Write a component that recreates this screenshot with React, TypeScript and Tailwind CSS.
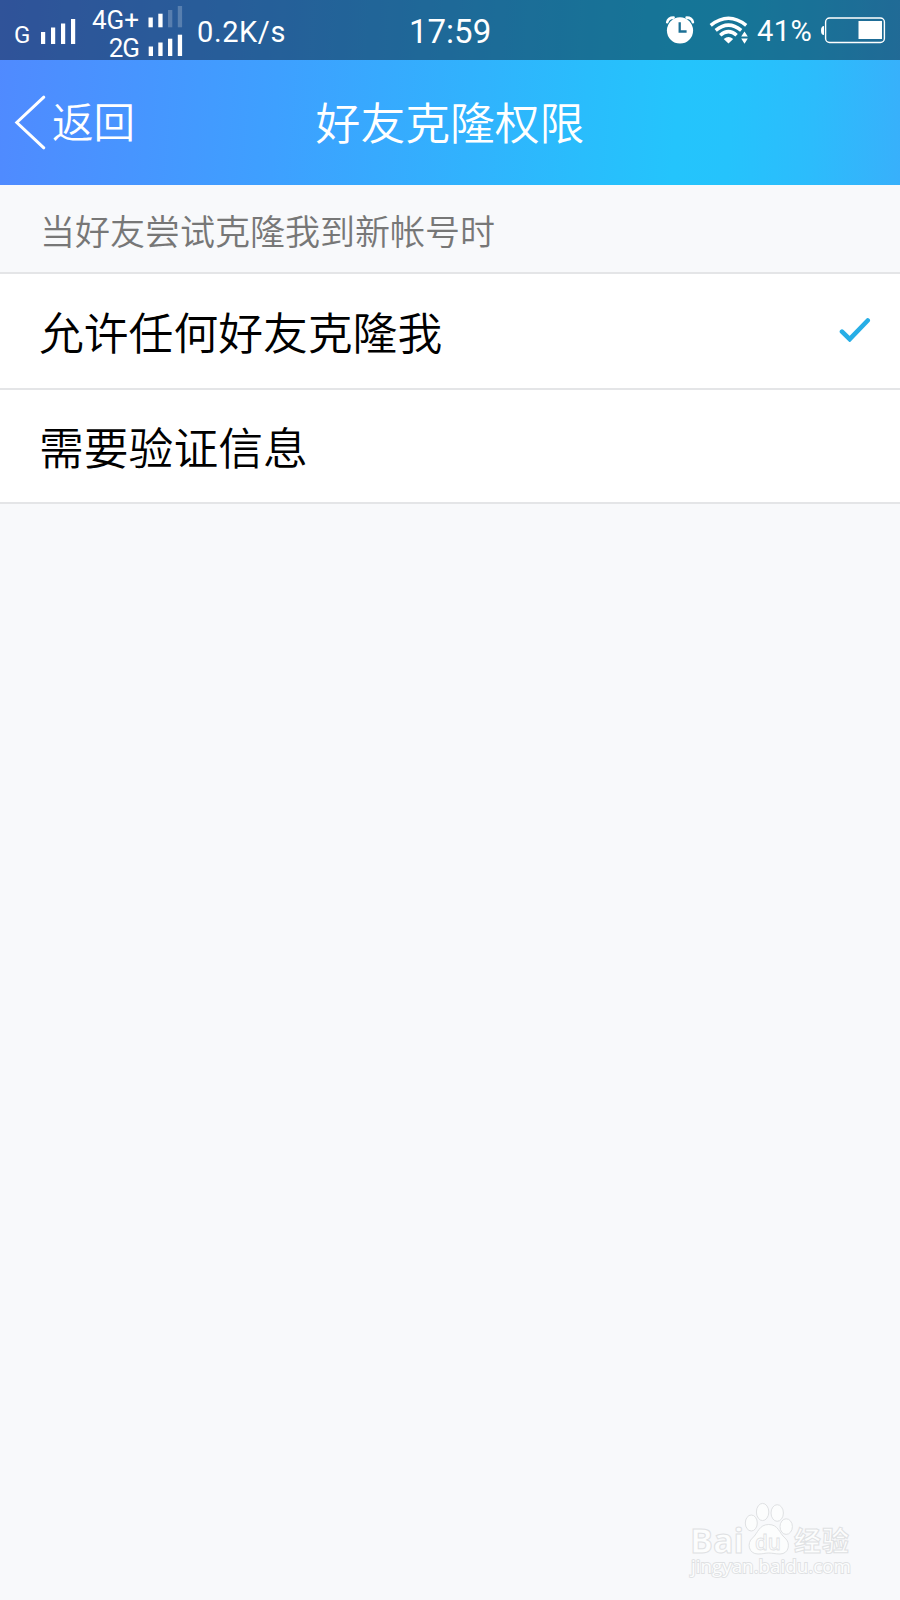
import React from "react";

function SignalBars() {
  return (
    <svg className="ml-[41px] mt-[18px] h-[27px] w-9 shrink-0" viewBox="41 18 36 27" fill="#fff">
      <rect x="41" y="32" width="4.2" height="12" />
      <rect x="51" y="27.5" width="4.2" height="16.5" />
      <rect x="61" y="23.5" width="4.2" height="20.5" />
      <rect x="71" y="19" width="4.2" height="25" />
    </svg>
  );
}

function StackedBars() {
  return (
    <svg className="h-[60px] w-9 shrink-0" viewBox="148 0 36 60" fill="#fff">
      <rect x="148.5" y="17.5" width="4.3" height="9.8" />
      <rect x="158.3" y="13.7" width="4.3" height="13.6" />
      <rect x="168" y="10" width="4.3" height="17.3" opacity="0.22" />
      <rect x="177.8" y="6" width="4.3" height="21.3" opacity="0.22" />
      <rect x="148.7" y="46.5" width="4.3" height="9.5" />
      <rect x="158.3" y="42.5" width="4.3" height="13.5" />
      <rect x="168" y="38.7" width="4.3" height="17.3" />
      <rect x="177.8" y="34.7" width="4.3" height="21.3" />
    </svg>
  );
}

function AlarmIcon() {
  return (
    <svg className="h-[60px] w-[30px] shrink-0" viewBox="665 0 30 60" fill="none">
      <circle cx="680" cy="30.4" r="13.1" fill="#fff" />
      <path d="M667.2 22.3 Q668.2 17.6 673.6 17.6M686.6 17.6 Q692 17.6 692.9 22.3" stroke="#fff" strokeWidth="2.6" strokeLinecap="round" />
      <path d="M679.7 22.2V31.5H686.6" stroke="#1c7095" strokeWidth="2.3" />
    </svg>
  );
}

function WifiIcon() {
  return (
    <svg className="ml-3.5 h-[60px] w-10 shrink-0" viewBox="709 0 40 60" fill="none">
      <g stroke="#fff" strokeWidth="3.5">
        <path d="M710.7 25.4 Q728.5 11.2 746.2 25.4" />
        <path d="M715.7 30.4 Q728.5 19.8 741.2 30.4" />
        <path d="M720.2 35.2 Q728.5 27.9 736.6 35.2" />
      </g>
      <path d="M723.7 39 Q728.5 34.9 733.2 39L728.5 43.5Z" fill="#fff" />
      <path d="M744.5 31.4L747.8 36.6H741.2ZM744.5 43.8L747.8 38.4H741.2Z" fill="#fff" />
    </svg>
  );
}

function BatteryIcon() {
  return (
    <svg className="h-[60px] w-[66px] shrink-0" viewBox="820 0 66 60" fill="none">
      <path d="M824 26Q821 26 821 30.5T824 35Z" fill="#fff" />
      <rect x="825.6" y="18" width="58.8" height="24.5" rx="4" stroke="#fff" strokeWidth="1.4" />
      <rect x="858.5" y="21" width="23.5" height="18" fill="#fff" />
    </svg>
  );
}

function StatusBar() {
  return (
    <div className="grid h-[60px] grid-cols-[410px_1fr_235px] bg-black/40 font-[Roboto,sans-serif] leading-none text-white">
      <div className="flex">
        <span className="-mr-[41px] w-[41px] pl-3.5 pt-[23px] text-[24px]">G</span>
        <SignalBars />
        <div className="flex w-[71px] flex-col items-end pr-[9px] pt-[7px] text-[26px] leading-[26px]">
          <span className="h-[28px]">4G+</span>
          <span className="tracking-[-1px]">2G</span>
        </div>
        <StackedBars />
        <span className="pl-[13px] pt-[18px] text-[29px] tracking-[0.6px]">0.2K/s</span>
      </div>
      <span className="-ml-px pt-[15px] text-[33px]">17:59</span>
      <div className="flex">
        <AlarmIcon />
        <WifiIcon />
        <span className="w-[71px] pl-2 pt-[17px] text-[29px] tracking-[0.5px]">41%</span>
        <BatteryIcon />
      </div>
    </div>
  );
}

function TitleBar() {
  return (
    <header className="grid h-[125px] grid-cols-[315px_1fr_315px] items-center text-white">
      <button className="-mt-0.5 flex items-center pl-[14px] text-left">
        <svg className="h-14 w-8 shrink-0" viewBox="14 94 32 56" fill="none">
          <path d="M43.8 97.2L16.8 122.5L43.8 147.8" stroke="#fff" strokeWidth="3" strokeLinecap="round" />
        </svg>
        <span className="-mt-0.5 ml-1.5 text-[41.5px] font-[350] leading-none">返回</span>
      </button>
      <h1 className="-mt-0.5 whitespace-nowrap text-center text-[44.8px] font-[350] leading-none">好友克隆权限</h1>
    </header>
  );
}

function OptionRow({ label, checked = false }: { label: string; checked?: boolean }) {
  return (
    <li className="flex h-[114px] items-center justify-between border-b-2 border-[#e4e5e7] bg-white pl-[39px] pr-[28px] first:h-[116px]">
      <span className="text-[44.8px] font-[350] leading-none text-black">{label}</span>
      {checked && (
        <svg className="-mt-[5px] h-[26px] w-[34px]" viewBox="838 316 34 26" fill="none">
          <path d="M842 331.7L849.7 339.2L867.7 320.5" stroke="#27aee6" strokeWidth="4.6" strokeLinecap="round" />
        </svg>
      )}
    </li>
  );
}

function Watermark() {
  return (
    <svg className="h-[100px] w-[200px]" viewBox="0 0 200 100" fill="#fcfdfd" stroke="#dfe1e3" strokeWidth="1">
      <text x="20" y="62.5" fontSize="34" fontWeight="700" textLength="54" lengthAdjust="spacingAndGlyphs" className="font-[Open_Sans,sans-serif]">Bai</text>
      <ellipse cx="81.3" cy="33" rx="6" ry="8" />
      <ellipse cx="92.6" cy="22" rx="6.2" ry="8.6" />
      <ellipse cx="107.2" cy="23" rx="6.2" ry="8.3" />
      <ellipse cx="116.2" cy="36.6" rx="6.2" ry="7.8" />
      <path d="M98.7 34.5C89 34.5 88 43 82.5 48C76.5 53 78.5 64 88 64C93 64 95 63 98.7 63S105 64 110 64C119 64 121 53 115 48C109 43 108.5 34.5 98.7 34.5Z" />
      <text x="85" y="59.5" fontSize="21" fontWeight="600" textLength="26" lengthAdjust="spacingAndGlyphs" strokeWidth="0.8" className="font-[Open_Sans,sans-serif]">du</text>
      <text x="124" y="60.5" fontSize="27" fontWeight="700" textLength="55" className="font-[Noto_Sans_CJK_SC,sans-serif]">经验</text>
      <text x="21" y="83" fontSize="18" textLength="160" lengthAdjust="spacingAndGlyphs" strokeWidth="1.8" className="font-[Open_Sans,sans-serif] [paint-order:stroke]">jingyan.baidu.com</text>
    </svg>
  );
}

export default function App() {
  return (
    <div className="flex h-[1600px] w-[900px] flex-col overflow-hidden bg-[#f8f9fb] font-[Noto_Sans_CJK_SC,sans-serif]">
      <div className="bg-[linear-gradient(94deg,#508aff_0%,#3ea0ff_31%,#29bdfc_65%,#24c4fc_75%,#25c3fc_81%,#2cbcfc_90%,#38b0fb_100%)]">
        <StatusBar />
        <TitleBar />
      </div>
      <h2 className="flex h-[89px] items-center border-b-2 border-[#e4e5e7] pl-10 pt-px text-[35px] font-[350] leading-none text-[#777]">
        当好友尝试克隆我到新帐号时
      </h2>
      <ul>
        <OptionRow label="允许任何好友克隆我" checked />
        <OptionRow label="需要验证信息" />
      </ul>
      <footer className="mt-auto flex h-[110px] justify-end pr-[30px]">
        <Watermark />
      </footer>
    </div>
  );
}
